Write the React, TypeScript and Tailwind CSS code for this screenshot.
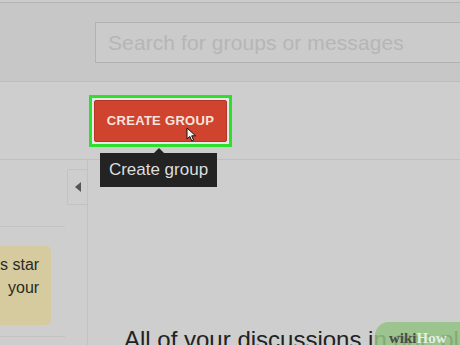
import React from "react";

function Cursor() {
  return (
    <svg width="11" height="15" viewBox="0 0 11 15" className="absolute left-[186px] top-[127px]">
      <path d="M1 1 L1 12 L3.8 9.4 L5.8 14 L7.6 13.2 L5.7 8.8 L9.6 8.8 Z" fill="#f4f4f4" stroke="#111" strokeWidth="1" strokeLinejoin="round" />
    </svg>
  );
}

export default function App() {
  return (
    <div className="relative w-[460px] h-[345px] overflow-hidden bg-[#cecece] font-['Liberation_Sans',Arial,sans-serif]">
      {/* top header */}
      <div className="h-[2px] bg-[#cbcbcb]" />
      <div className="h-[80px] bg-[#c7c7c7] border-t border-[#b4b4b4] border-b border-b-[#bdbdbd] pt-[19px] pl-[95px]">
        <div className="h-[41px] bg-[#cbcbcb] border border-[#b2b2b2] border-r-0 flex items-center pl-[12px]">
          <span className="text-[21px] text-[#b6b6b6] tracking-[0.1px]">Search for groups or messages</span>
        </div>
      </div>

      {/* toolbar */}
      <div className="h-[78px] border-b border-[#c0c0c0] pt-[13px] pl-[89px]">
        <div className="w-[143px] h-[52px] border-[3px] border-[#2ee02e] p-[2px] bg-[#e8e8e8]">
          <div className="h-full bg-[#cf432f] border border-[#b43726] rounded-[2px] flex items-center justify-center">
            <span className="text-[13px] font-bold text-[#f6e4de] tracking-[0.3px]">CREATE GROUP</span>
          </div>
        </div>
      </div>

      {/* body */}
      <div className="flex h-[185px]">
        <div className="w-[88px] flex border-r border-[#c2c2c2]">
          <div className="w-[66px] pt-[66px]">
            <div className="border-t border-[#c2c2c2] pt-[19px] pr-[14px]">
              <div className="h-[79px] bg-[#d5cb9e] rounded-r-[5px] pt-[7px] text-[16px] leading-[23px] text-[#2a2a24] whitespace-nowrap overflow-hidden">
                <div>s star</div>
                <div className="pl-[8px]">your</div>
              </div>
            </div>
            <div className="mt-[11px] border-t border-[#c2c2c2]" />
          </div>
          <div className="flex-1 pt-[9px]">
            <div className="h-[36px] w-[20px] ml-[2px] border-l border-y border-[#c3c3c3] bg-[#cecece] flex items-center justify-center">
              <div className="w-0 h-0 border-y-[5px] border-y-transparent border-r-[6px] border-r-[#555]" />
            </div>
          </div>
        </div>
        <div className="flex-1 relative">
          <div className="absolute left-[36px] top-[166px] text-[24px] text-[#222] whitespace-nowrap leading-[28px]">
            All of your discussions in one place
          </div>
        </div>
      </div>

      {/* tooltip */}
      <div className="absolute left-[100px] top-[153px] w-[117px] h-[34px] bg-[#232323] flex items-center justify-center">
        <span className="text-[17px] text-[#dedede]">Create group</span>
      </div>
      <div className="absolute left-[154px] top-[148px] w-0 h-0 border-x-[5px] border-x-transparent border-b-[5px] border-b-[#232323]" />

      <Cursor />

      {/* watermark */}
      <div className="absolute left-[375px] top-[322px] w-[100px] h-[30px] rounded-tl-[14px] bg-[#93c283]/85 pl-[14px] pt-[4px]">
        <span className="text-[15px] font-bold text-[#4a4a4a] font-['Liberation_Serif',serif]">wiki</span>
        <span className="text-[15px] font-bold text-[#e6eee0] font-['Liberation_Serif',serif]">How</span>
      </div>
    </div>
  );
}
